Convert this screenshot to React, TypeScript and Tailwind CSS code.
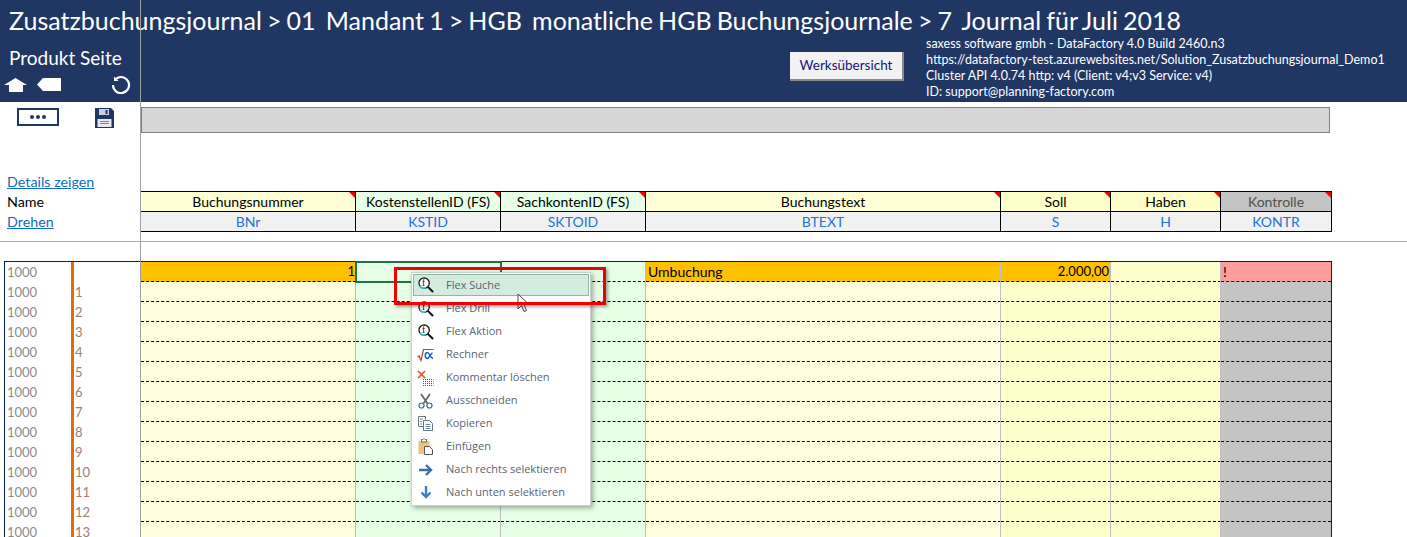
import React from 'react';

const FONT = "font-['Lato','Carlito','Liberation_Sans',sans-serif]";
const GRID = 'grid grid-cols-[215px_145px_145px_355px_110px_110px_110px]';

const columns = [
  { title: 'Buchungsnummer', code: 'BNr', bg: 'bg-[#ffffd5]', cell: 'bg-[#ffffdd]' },
  { title: 'KostenstellenID (FS)', code: 'KSTID', bg: 'bg-[#e6ffe6]', cell: 'bg-[#e6ffe6]' },
  { title: 'SachkontenID (FS)', code: 'SKTOID', bg: 'bg-[#e6ffe6]', cell: 'bg-[#e6ffe6]' },
  { title: 'Buchungstext', code: 'BTEXT', bg: 'bg-[#ffffd5]', cell: 'bg-[#ffffdd]' },
  { title: 'Soll', code: 'S', bg: 'bg-[#ffffc9]', cell: 'bg-[#ffffcc]' },
  { title: 'Haben', code: 'H', bg: 'bg-[#ffffc9]', cell: 'bg-[#ffffcc]' },
  { title: 'Kontrolle', code: 'KONTR', bg: 'bg-[#c4c4c4]', cell: 'bg-[#c4c4c4]' },
];

const FlexIcon = () => (
  <svg width="16" height="16" viewBox="0 0 17 17" fill="none">
    <circle cx="6.500" cy="6.500" r="5.500" fill="#fff" stroke="#111" strokeWidth="1.300" />
    <path d="M2 9.500a5 5 0 0 0 6.500 1.500" stroke="#35c8d8" strokeWidth="1.600" />
    <text x="4.300" y="10" fontSize="10" fontFamily="Liberation Serif, serif" fill="#111">f</text>
    <path d="M10.500 10.500l5.500 5.500" stroke="#111" strokeWidth="2.200" />
  </svg>
);

const RechnerIcon = () => (
  <svg width="17" height="14" viewBox="0 0 17 14" fill="none">
    <path d="M0.500 9l1.500-1 2 4.500L6.500 1.500H16.500" stroke="#c8382c" strokeWidth="1.200" />
    <path d="M15.500 5c-1.500 0-3.500 5.500-5 5.500-3 0-3-6 0-6 1.500 0 3.500 6 5.500 6" stroke="#1168c8" strokeWidth="1.500" />
  </svg>
);

const KommentarIcon = () => (
  <svg width="17" height="16" viewBox="0 0 17 16" fill="none">
    <path d="M1 1l7 7M8 1L1 8" stroke="#e8502a" strokeWidth="1.600" />
    <path d="M6 9.500h10.500M6 11.500h10.500M6 13.500h10.500M6 15.500h10.500" stroke="#555" strokeDasharray="1 1" />
  </svg>
);

const ScissorsIcon = () => (
  <svg width="15" height="16" viewBox="0 0 15 16" fill="none">
    <path d="M3 1l6.500 9.500M12 1L5.500 10.500" stroke="#666" strokeWidth="1.800" />
    <circle cx="3.500" cy="12.500" r="2.500" stroke="#2f6fb0" strokeWidth="1.200" />
    <circle cx="11.500" cy="12.500" r="2.500" stroke="#2f6fb0" strokeWidth="1.200" />
  </svg>
);

const CopyIcon = () => (
  <svg width="16" height="15" viewBox="0 0 16 15" fill="none" stroke="#6a7686">
    <path d="M0.500 0.500h7l0 3M0.500 0.500v10h4.500" />
    <path d="M5.500 4.500h6l3 3v7h-9z" fill="#fff" />
    <path d="M2 3h3M2 5.500h2M2 8h2M7.500 8.500h5M7.500 10.500h5M7.500 12.500h5" stroke="#6a8aa8" />
  </svg>
);

const PasteIcon = () => (
  <svg width="16" height="17" viewBox="0 0 16 17" fill="none">
    <path d="M0.500 3h11v13h-11z" fill="#eec27a" />
    <path d="M3.500 4V1.500h1.500L6 0.500l1 1h1.500V4z" fill="#fff" stroke="#666" />
    <path d="M6.500 8.500h5l3 3v5h-8z" fill="#fff" stroke="#555" />
  </svg>
);

const RightIcon = () => (
  <svg width="14" height="12" viewBox="0 0 14 12" fill="none">
    <path d="M0 6h11M7 1l5 5-5 5" stroke="#3f6fa8" strokeWidth="2.400" />
  </svg>
);

const DownIcon = () => (
  <svg width="12" height="13" viewBox="0 0 12 13" fill="none">
    <path d="M6 0v10M1.500 6.500L6 11l4.500-4.500" stroke="#3f7fc0" strokeWidth="2.400" />
  </svg>
);

const menu = [
  { label: 'Flex Suche', icon: <FlexIcon /> },
  { label: 'Flex Drill', icon: <FlexIcon /> },
  { label: 'Flex Aktion', icon: <FlexIcon /> },
  { label: 'Rechner', icon: <RechnerIcon /> },
  { label: 'Kommentar löschen', icon: <KommentarIcon /> },
  { label: 'Ausschneiden', icon: <ScissorsIcon /> },
  { label: 'Kopieren', icon: <CopyIcon /> },
  { label: 'Einfügen', icon: <PasteIcon /> },
  { label: 'Nach rechts selektieren', icon: <RightIcon /> },
  { label: 'Nach unten selektieren', icon: <DownIcon /> },
];

const Header = () => (
  <div className="h-[102px] shrink-0 bg-[#203764] text-white flex flex-col">
    <div className="h-[35px] pl-[9px] pt-[3px] text-[25px] [word-spacing:-1.300px] leading-[35px] whitespace-pre">
      {'Zusatzbuchungsjournal > 01  Mandant 1 > HGB  monatliche HGB Buchungsjournale > 7  Journal für Juli 2018'}
    </div>
    <div className="flex flex-1">
      <div className="w-[141px] shrink-0 flex flex-col">
        <div className="pl-[9px] pt-[11px] text-[19px] leading-[24px] whitespace-nowrap">Produkt Seite</div>
        <div className="flex items-center pt-[5px]">
          <svg className="ml-[4px]" width="23" height="14" viewBox="0 0 23 14" fill="#fff">
            <path d="M11.500 0L23 7h-4v7H5V7H0z" />
          </svg>
          <svg className="ml-[10px]" width="24" height="13" viewBox="0 0 24 13" fill="#fff">
            <path d="M6 0h18v13H6L0 6.500z" />
          </svg>
          <svg className="ml-[50px]" width="20" height="19" viewBox="0 0 20 19" fill="none" stroke="#fff" strokeWidth="2.200">
            <path d="M5 3.800A8 8 0 1 1 2 10" />
            <path d="M3 1.500v4.500h4.500z" fill="#fff" stroke="none" />
          </svg>
        </div>
      </div>
      <div className="ml-[649px] mt-[17px] h-[29px] w-[114px] bg-[#f2f2f2] border-b-2 border-r-2 border-[#8c8c8c] text-[#14147a] text-[13.500px] leading-[27px] text-center">
        Werksübersicht
      </div>
      <div className="ml-[22px] pt-px text-[12.500px] leading-[16px] whitespace-nowrap">
        <div>saxess software gmbh - DataFactory 4.0 Build 2460.n3</div>
        <div>https://datafactory-test.azurewebsites.net/Solution_Zusatzbuchungsjournal_Demo1</div>
        <div>Cluster API 4.0.74 http: v4 (Client: v4;v3 Service: v4)</div>
        <div>ID: support@planning-factory.com</div>
      </div>
    </div>
  </div>
);

const Toolbar = () => (
  <div className="flex h-[69px] shrink-0">
    <div className="w-[141px] shrink-0 flex pt-[6px]">
      <div className="ml-[17px] h-[18px] w-[42px] border-2 border-[#203764] flex items-center justify-center gap-[2px]">
        <span className="h-[4px] w-[4px] rounded-full bg-[#203764]" />
        <span className="h-[4px] w-[4px] rounded-full bg-[#203764]" />
        <span className="h-[4px] w-[4px] rounded-full bg-[#203764]" />
      </div>
      <svg className="ml-[36px]" width="19" height="20" viewBox="0 0 19 20">
        <path d="M0 0h16l3 3v17H0z" fill="#203764" />
        <path d="M4 1h10v6H4z" fill="#c8cedb" />
        <path d="M10.500 2h2v4h-2z" fill="#203764" />
        <path d="M2.500 11h14v8h-14z" fill="#e8eaf0" />
        <path d="M5 13.500h9M5 15.500h9" stroke="#7a86a0" />
      </svg>
    </div>
    <div className="mt-[5px] h-[26px] w-[1189px] bg-[#d6d6d6] border border-[#808080]" />
  </div>
);

const ColumnHead = () => (
  <div className="shrink-0 text-[14px] leading-[19px]">
    <div className="h-[20px] pl-[7px] pt-px text-[#0f6cc8] underline text-[14.300px] leading-[20px]">Details zeigen</div>
    <div className="flex">
      <div className="w-[141px] shrink-0 pl-[7px] pt-px text-[14.300px] leading-[20px]">
        <div className="h-[20px] text-black">Name</div>
        <div className="h-[20px] text-[#0f6cc8] underline">Drehen</div>
      </div>
      <div className="w-[1191px] border-t border-r border-black">
        <div className={`${GRID} h-[20px]`}>
          {columns.map(c => (
            <div
              key={c.title}
              className={`relative ${c.bg} border-b border-r last:border-r-0 border-black text-center whitespace-nowrap ${c.title === 'Kontrolle' ? 'text-[#505050]' : 'text-black'}`}
            >
              {c.title}
              <span className="absolute right-0 top-0 h-[6px] w-[6px] bg-[#f00000] [clip-path:polygon(0_0,100%_0,100%_100%)]" />
            </div>
          ))}
        </div>
        <div className={`${GRID} h-[20px]`}>
          {columns.map(c => (
            <div key={c.code} className="bg-[#f1f1f1] border-b border-r last:border-r-0 border-black text-center text-[#1e72d2]">
              {c.code}
            </div>
          ))}
        </div>
      </div>
    </div>
  </div>
);

const firstRow = ['bg-[#ffc000]', 'bg-[#e6ffe6]', 'bg-[#e6ffe6]', 'bg-[#ffc000]', 'bg-[#ffc000]', 'bg-[#ffffcc]', 'bg-[#ff9c9c]'];

const Sheet = () => (
  <div className="ml-[4px] w-[1328px] border-t border-l border-r border-[#002060] text-[14px] leading-[19px]">
    {Array.from({ length: 14 }).map((_, i) => (
      <div key={i} className="flex h-[20px]">
        <div className="w-[136px] shrink-0 flex text-[#8c8c8c] text-[13px] leading-[21px]">
          <div className="w-[66px] pl-[2px]">1000</div>
          <div className="w-[3px] bg-[#e26b0a]" />
          <div className="pl-[1px] text-[#9c8070]">{i > 0 ? i : ''}</div>
        </div>
        <div className={`${GRID} flex-1`}>
          {columns.map((c, j) => (
            <div
              key={c.code}
              className={`${i === 0 ? firstRow[j] : c.cell} border-b border-dashed border-b-black relative whitespace-nowrap text-black`}
            >
              {j < 6 && <span className="absolute right-0 top-0 h-[20px] w-px bg-[#c0c0c0]" />}
              {i === 0 && j === 0 && <div className="text-right pr-[1px] text-[13px]">1</div>}
              {i === 0 && j === 3 && <div className="pl-[2px]">Umbuchung</div>}
              {i === 0 && j === 4 && <div className="text-right pr-[2px] text-[13px]">2.000,00</div>}
              {i === 0 && j === 6 && <div className="pl-[2px]">!</div>}
            </div>
          ))}
        </div>
      </div>
    ))}
  </div>
);

const ContextMenu = () => (
  <div className="absolute left-[411px] top-[272px] w-[180px] h-[234px] bg-white border border-[#cfcfcf] shadow-[2px_2px_5px_rgba(0,0,0,0.35)] p-px font-['Open_Sans',sans-serif] text-[11px] text-[#5a6472]">
    {menu.map((m, i) => (
      <div key={m.label} className={`flex items-center ${i === 0 ? 'h-[22px] mb-px bg-[#d3ecdf] border border-[#86bf9e]' : 'h-[23px]'}`}>
        <div className={`${i === 0 ? 'w-[24px] mr-[8px]' : 'w-[25px] mr-[8px]'} shrink-0 flex justify-center`}>{m.icon}</div>
        <span className="whitespace-nowrap">{m.label}</span>
      </div>
    ))}
  </div>
);

export default function App() {
  return (
    <div className={`relative w-[1407px] h-[537px] overflow-hidden bg-white flex flex-col ${FONT}`}>
      <Header />
      <Toolbar />
      <ColumnHead />
      <div className="h-[20px] shrink-0 mt-[9px] border-t border-[#a6a6a6]" />
      <Sheet />

      <div className="absolute left-[140px] top-0 bottom-0 w-px bg-[#a0a0a0]" />
      <div className="absolute left-[355px] top-[261px] w-[147px] h-[22px] border-2 border-[#217346]" />
      <ContextMenu />
      <svg className="absolute left-[517px] top-[293px]" width="13" height="21" viewBox="0 0 13 21">
        <path d="M1 1v15l3.500-3.500 2.500 6 2.500-1-2.500-6h5z" fill="#fff" stroke="#444" />
      </svg>
      <div className="absolute left-[394px] top-[267px] w-[212px] h-[38px] border-[3px] border-[#f00000] shadow-[2px_2px_3px_rgba(0,0,0,0.35)]" />
    </div>
  );
}
